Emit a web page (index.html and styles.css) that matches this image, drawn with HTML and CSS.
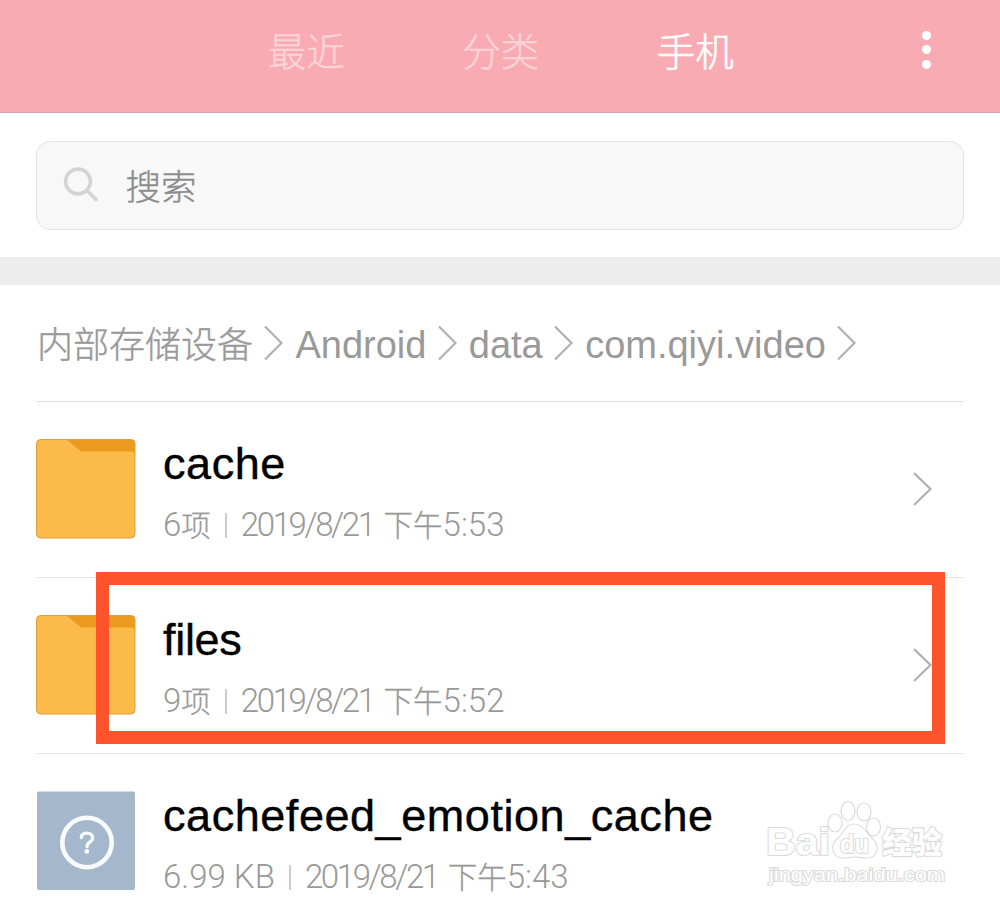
FILE: index.html
```
<!doctype html>
<html lang="zh-CN">
  <head>
    <meta charset="UTF-8" />
    <meta name="viewport" content="width=device-width, initial-scale=1.0" />
    <title>文件管理</title>
    <link rel="stylesheet" href="styles.css">
  </head>
  <body>
    <header class="header">
      <nav class="tabs">
        <a class="tab">最近</a>
        <a class="tab">分类</a>
        <a class="tab active">手机</a>
      </nav>
      <div class="more"><i></i><i></i><i></i></div>
    </header>

    <div class="search-area">
      <div class="search-box">
        <svg class="search-icon" width="36" height="36" viewBox="0 0 36 36">
          <circle cx="15" cy="14.5" r="12.4" />
          <path d="M24 23.5L33 32.5" />
        </svg>
        <span class="search-text">搜索</span>
      </div>
    </div>

    <div class="breadcrumb">
      <span class="crumb-cn">内部存储设备</span>
      <svg class="chevron" width="19" height="36" viewBox="0 0 19 36"><path d="M1 1.5L17.5 18L1 34.5" /></svg>
      <span class="crumb">Android</span>
      <svg class="chevron" width="19" height="36" viewBox="0 0 19 36"><path d="M1 1.5L17.5 18L1 34.5" /></svg>
      <span class="crumb">data</span>
      <svg class="chevron" width="19" height="36" viewBox="0 0 19 36"><path d="M1 1.5L17.5 18L1 34.5" /></svg>
      <span class="crumb">com.qiyi.video</span>
      <svg class="chevron" width="19" height="36" viewBox="0 0 19 36"><path d="M1 1.5L17.5 18L1 34.5" /></svg>
    </div>

    <main class="file-list">
      <div class="row">
        <svg class="icon" width="100" height="100" viewBox="0 0 100 100">
          <rect class="folder" x="0.5" y="0.5" width="98.5" height="98.5" rx="4" />
          <path class="folder-tab" d="M31 1H95Q98.5 1 98.5 5V15Q98 12.5 95 12.5H48Q45 12.5 43 11Z" />
        </svg>
        <div class="info">
          <div class="name">cache</div>
          <div class="meta"><span>6</span><span class="cn">项</span><i class="bar"></i><span class="date">2019/8/21</span><span class="cn">下午</span><span class="time">5:53</span></div>
        </div>
        <svg class="chevron" width="21" height="36" viewBox="0 0 21 36"><path d="M2 2L18.5 18L2 34" /></svg>
      </div>

      <div class="row">
        <svg class="icon" width="100" height="100" viewBox="0 0 100 100">
          <rect class="folder" x="0.5" y="0.5" width="98.5" height="98.5" rx="4" />
          <path class="folder-tab" d="M31 1H95Q98.5 1 98.5 5V15Q98 12.5 95 12.5H48Q45 12.5 43 11Z" />
        </svg>
        <div class="info">
          <div class="name tight">files</div>
          <div class="meta"><span>9</span><span class="cn">项</span><i class="bar"></i><span class="date">2019/8/21</span><span class="cn">下午</span><span class="time">5:52</span></div>
        </div>
        <svg class="chevron" width="21" height="36" viewBox="0 0 21 36"><path d="M2 2L18.5 18L2 34" /></svg>
        <div class="highlight"></div>
      </div>

      <div class="row">
        <svg class="icon" width="100" height="100" viewBox="0 0 100 100">
          <rect class="unknown" x="1" y="0.5" width="98" height="98.5" rx="2" />
          <circle class="ring" cx="51" cy="51.5" r="24.7" />
          <path class="mark" d="M45.3 46.5C45.5 40.7 56.7 40.5 56.7 47C56.7 51 51 50.8 51 55.5" />
          <circle class="dot" cx="50.8" cy="60.4" r="2.4" />
        </svg>
        <div class="info">
          <div class="name">cachefeed_emotion_cache</div>
          <div class="meta"><span class="size">6.99 KB</span><i class="bar"></i><span class="date">2019/8/21</span><span class="cn">下午</span><span class="time">5:43</span></div>
        </div>
      </div>
    </main>

    <svg class="watermark" width="190" height="100" viewBox="0 0 190 100">
      <text class="brand" x="4" y="65" textLength="64" lengthAdjust="spacingAndGlyphs">Bai</text>
      <g class="paw">
        <ellipse cx="73" cy="33" rx="7" ry="9" />
        <ellipse cx="86" cy="21" rx="7" ry="9.5" />
        <ellipse cx="102" cy="22" rx="7" ry="9" />
        <ellipse cx="111.5" cy="37" rx="7" ry="9" />
        <path d="M92 34C83 34 82 43 76 48C68 54 69 68 81 68C87 68 89 67 92 67C96 67 98 68 104 68C117 68 118 55 110 48C104 43 101 34 92 34Z" />
      </g>
      <text class="du" x="78" y="63" textLength="29" lengthAdjust="spacingAndGlyphs">du</text>
      <text class="brand-cn" x="120" y="63" textLength="60" lengthAdjust="spacingAndGlyphs">经验</text>
      <text class="site" x="7" y="91" textLength="176" lengthAdjust="spacingAndGlyphs">jingyan.baidu.com</text>
    </svg>
  </body>
</html>
```
FILE: styles.css
```
* {
  box-sizing: border-box;
}

body {
  margin: 0;
  height: 908px;
  overflow: hidden;
  position: relative;
  background: #fff;
  font-family: "Liberation Sans", "Noto Sans CJK SC", sans-serif;
  color: #000;
}

.header {
  display: flex;
  height: 113px;
  padding-left: 209px;
  background: #f8abb2;
  border-bottom: 1px solid #d5a0ad;
}

.tabs {
  display: flex;
}

.tab {
  width: 194.5px;
  line-height: 99px;
  text-align: center;
  font-family: "Noto Sans CJK SC", sans-serif;
  font-size: 38.5px;
  font-weight: 300;
  color: #fcd3d6;
  -webkit-text-stroke: 0.5px #fcd3d6;
}

.tab.active {
  color: #fff;
  -webkit-text-stroke: 0.6px #fff;
}

.more {
  display: flex;
  flex-direction: column;
  gap: 5.5px;
  margin: 30.5px 0 0 129px;
}

.more i {
  width: 9px;
  height: 9px;
  border-radius: 50%;
  background: #fff;
}

.search-area {
  height: 172px;
  padding: 27.5px 36px 0;
  border-bottom: 28px solid #ededed;
}

.search-box {
  display: flex;
  align-items: center;
  height: 89px;
  padding-left: 26px;
  border: 1px solid #e4e4e4;
  border-radius: 14px;
  background: #f8f8f8;
}

.search-icon {
  fill: none;
  stroke: #d3d3d3;
  stroke-width: 3.6;
  stroke-linecap: round;
}

.search-text {
  margin-left: 26.5px;
  padding-bottom: 2px;
  font-family: "Noto Sans CJK SC", sans-serif;
  font-size: 35.5px;
  font-weight: 300;
  color: #8c8c8c;
  -webkit-text-stroke: 0.4px #8c8c8c;
}

.breadcrumb {
  display: flex;
  align-items: center;
  height: 117px;
  margin: 0 37px;
  border-bottom: 1px solid #dcdcdc;
  font-size: 38px;
  line-height: 44px;
  color: #999;
}

.crumb-cn {
  padding-bottom: 3px;
  font-family: "Noto Sans CJK SC", sans-serif;
  font-size: 36px;
  font-weight: 300;
  -webkit-text-stroke: 0.4px #999;
}

.crumb {
  padding-top: 4px;
}

.chevron {
  flex: none;
  fill: none;
  stroke: #b0b0b0;
  stroke-width: 2.2;
}

.breadcrumb .chevron {
  margin: 0 12px 0 11.4px;
}

.row {
  position: relative;
  display: flex;
  align-items: center;
  height: 176px;
  margin: 0 37px;
  padding-bottom: 2px;
  border-bottom: 1.5px solid #e4e4e4;
}

.icon {
  flex: none;
  margin-left: -1px;
}

.folder {
  fill: #fcba4b;
  stroke: #d9a03c;
}

.folder-tab {
  fill: #eb9c20;
}

.unknown {
  fill: #a4b7cc;
}

.ring,
.mark {
  fill: none;
  stroke: #f8fcff;
  stroke-width: 4.6;
}

.mark {
  stroke-width: 3.4;
  stroke-linecap: round;
}

.dot {
  fill: #f8fcff;
}

.info {
  flex: 1;
  padding: 5px 0 0 27px;
}

.name {
  font-size: 45px;
  line-height: 54px;
  letter-spacing: 0.55px;
  -webkit-text-stroke: 0.4px #000;
}

.name.tight {
  letter-spacing: -0.3px;
}

.meta {
  display: flex;
  align-items: center;
  height: 40px;
  margin-top: 14px;
  font-family: Roboto, sans-serif;
  font-size: 33px;
  font-weight: 300;
  line-height: 40px;
  color: #999;
}

.cn {
  padding-bottom: 4px;
  font-family: "Noto Sans CJK SC", sans-serif;
  font-size: 29.5px;
  -webkit-text-stroke: 0.3px #999;
}

.bar {
  width: 2px;
  height: 25px;
  margin: 0 14px;
  background: #ccc;
}

.date {
  margin-right: 10px;
  letter-spacing: -2.4px;
}

.row > .chevron {
  margin-right: 30.5px;
}

/* frame around the folder to open */
.highlight {
  position: absolute;
  left: 58.5px;
  top: -6px;
  width: 849.5px;
  height: 171.5px;
  border: 13px solid #ff542b;
}

.watermark {
  position: absolute;
  left: 762px;
  top: 790px;
  fill: #fff;
  stroke: #dcdcdc;
  stroke-width: 1.2;
}

.watermark text {
  paint-order: stroke;
  stroke-width: 2.2;
}

.brand {
  font-size: 39px;
  font-weight: bold;
}

.du {
  font-size: 25px;
  font-weight: bold;
}

.brand-cn {
  font-family: "Noto Sans CJK SC", sans-serif;
  font-size: 30px;
  font-weight: 900;
}

.site {
  font-size: 19px;
}
```
